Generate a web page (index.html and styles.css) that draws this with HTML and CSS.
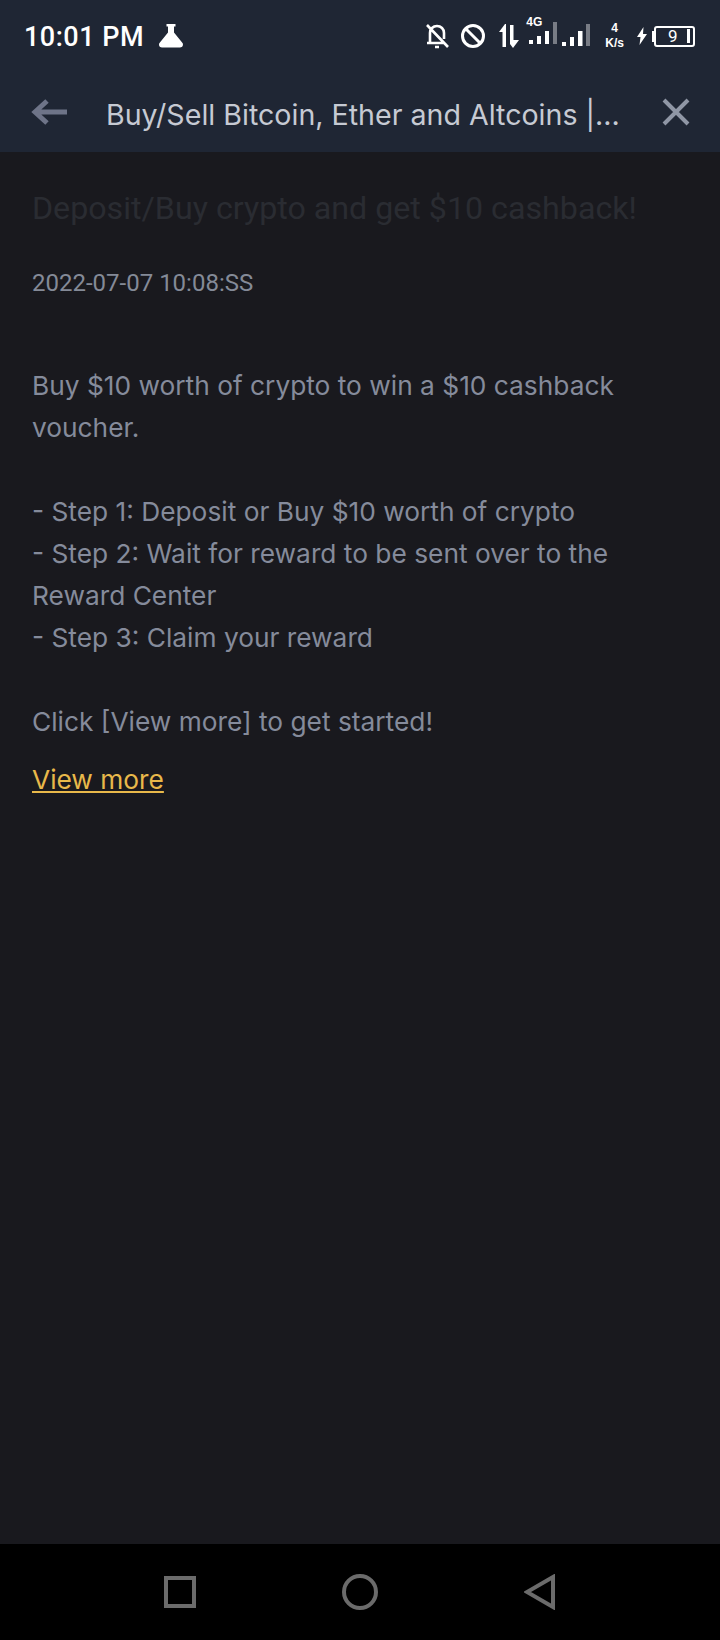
FILE: index.html
```html
<!DOCTYPE html>
<html lang="en">
<head>
    <meta charset="UTF-8">
    <meta name="viewport" content="width=device-width, initial-scale=1.0">
    <title>Deposit/Buy crypto and get $10 cashback!</title>
    <link rel="stylesheet" href="styles.css">
</head>
<body>

<div class="screen">
    <header class="top">
        <div class="status">
            <div class="clock">
                <span class="time">10:01 PM</span>
                <svg class="flask" width="26" height="26" viewBox="0 0 26 26">
                    <path d="M8.500 1h9v2.500h-1.500v6l8.500 10.500c1 1.500 .5 4.500-2.500 4.500h-18c-3 0-3.500-3-2.500-4.500l8.500-10.500v-6h-1.500z" fill="#fff"/>
                </svg>
            </div>
            <div class="indicators">
                <svg class="ico-bell" width="26" height="26" viewBox="0 0 26 26" fill="none" stroke="#fff" stroke-width="2.600">
                    <path d="M6 19v-9c0-4 3-7 7-7s7 3 7 7v6M3 20h17M11 24h4M3 2l21 22"/>
                </svg>
                <svg class="ico-ban" width="26" height="26" viewBox="0 0 26 26" fill="none" stroke="#fff" stroke-width="3">
                    <circle cx="13" cy="13" r="10.500"/>
                    <path d="M6 6l14 14"/>
                </svg>
                <svg class="ico-data" width="21" height="26" viewBox="0 0 21 26" fill="#fff">
                    <path d="M6 1l-6 8h3.500v15h3.500v-23zM11 2h3.500v15h5.500l-6 8-3-4z"/>
                </svg>
                <div class="signal">
                    <span class="net">4G</span>
                    <svg width="30" height="26" viewBox="0 0 30 26" fill="#fff">
                        <rect x="2" y="19" width="4" height="4"/>
                        <rect x="10" y="15" width="4" height="8"/>
                        <rect x="18" y="10" width="4" height="13"/>
                        <rect x="26" y="1" width="4" height="22" opacity=".4"/>
                    </svg>
                </div>
                <svg class="bars" width="30" height="26" viewBox="0 0 30 26" fill="#fff">
                    <rect x="1" y="19" width="4" height="4"/>
                    <rect x="9" y="14" width="4" height="9"/>
                    <rect x="17" y="8" width="4.500" height="15"/>
                    <rect x="25" y="1" width="4" height="22" opacity=".4"/>
                </svg>
                <div class="speed"><span>4</span><span>K/s</span></div>
                <div class="power">
                    <svg width="10" height="18" viewBox="0 0 10 18"><path d="M6.500 0l-6.500 10h3.500l-1 8 7.500-11h-4z" fill="#fff"/></svg>
                    <div class="battery"><span class="level">9</span><i class="tip"></i></div>
                </div>
            </div>
        </div>
        <nav class="toolbar">
            <svg class="back" width="38" height="28" viewBox="0 0 38 28" fill="none" stroke="#6e7488" stroke-width="5">
                <path d="M17 3l-12 11 12 11M5 14h32"/>
            </svg>
            <div class="page-title">Buy/Sell Bitcoin, Ether and Altcoins |...</div>
            <svg class="close" width="30" height="30" viewBox="0 0 30 30" fill="none" stroke="#8f96a5" stroke-width="4">
                <path d="M3 3l24 24M27 3l-24 24"/>
            </svg>
        </nav>
    </header>

    <main class="content">
        <h1 class="headline">Deposit/Buy crypto and get $10 cashback!</h1>
        <div class="stamp">2022-07-07 10:08:SS</div>
        <div class="body-text">
            <p>Buy $10 worth of crypto to win a $10 cashback voucher.</p>
            <p>- Step 1: Deposit or Buy $10 worth of crypto<br>
            - Step 2: Wait for reward to be sent over to the Reward Center<br>
            - Step 3: Claim your reward</p>
            <p>Click [View more] to get started!</p>
        </div>
        <a class="more" href="#">View more</a>
    </main>

    <footer class="navbar">
        <svg width="32" height="32" viewBox="0 0 32 32" fill="none" stroke="#6b6b6b" stroke-width="4"><rect x="2" y="2" width="28" height="28"/></svg>
        <svg width="36" height="36" viewBox="0 0 36 36" fill="none" stroke="#6b6b6b" stroke-width="4"><circle cx="18" cy="18" r="16"/></svg>
        <svg width="32" height="36" viewBox="0 0 32 36" fill="none" stroke="#6b6b6b" stroke-width="4"><path d="M29 3v30l-26-15z"/></svg>
    </footer>
</div>

</body>
</html>
```

FILE: styles.css
```css
* {
    box-sizing: border-box;
}
html, body {
    margin: 0;
    padding: 0;
}
body {
    background-color: #19191e;
    font-family: 'Inter', 'Noto Sans', sans-serif;
}
.screen {
    width: 720px;
    height: 1640px;
    display: flex;
    flex-direction: column;
    overflow: hidden;
}

/* top bar */
.top {
    height: 152px;
    flex: none;
    background-color: #1f2634;
}
.status {
    height: 72px;
    display: flex;
    align-items: center;
    justify-content: space-between;
    padding: 0 25px 0 24px;
    color: #fff;
}
.clock {
    display: flex;
    align-items: center;
    gap: 14px;
}
.time {
    padding-top: 2px;
    font-family: 'Roboto', sans-serif;
    font-size: 27px;
    font-weight: 500;
    letter-spacing: 0.5px;
}
.indicators {
    display: flex;
    align-items: center;
}
.ico-ban {
    margin-left: 10px;
}
.ico-data {
    margin-left: 13px;
}
.signal {
    position: relative;
    margin-left: 7px;
}
.net {
    position: absolute;
    left: -1px;
    top: -6px;
    font-family: 'Liberation Sans', sans-serif;
    font-size: 12px;
    font-weight: bold;
}
.bars {
    margin-left: 4px;
}
.speed {
    display: flex;
    flex-direction: column;
    align-items: center;
    font-family: 'Liberation Sans', sans-serif;
    font-size: 12px;
    font-weight: bold;
    line-height: 15px;
    margin: 0 13px 0 14px;
}
.power {
    display: flex;
    align-items: center;
    gap: 7px;
}
.battery {
    position: relative;
    width: 41px;
    height: 21px;
    border: 2px solid #fff;
    border-radius: 3px;
    display: flex;
    align-items: center;
    justify-content: space-between;
    padding: 0 3px 0 12px;
}
/* battery nib */
.battery::before {
    content: "";
    position: absolute;
    left: -4px;
    top: 3px;
    width: 2px;
    height: 11px;
    background-color: #fff;
}
.level {
    font-family: 'Roboto', sans-serif;
    font-size: 17px;
    line-height: 1;
}
.tip {
    width: 3px;
    height: 14px;
    background-color: #fff;
}
.toolbar {
    height: 80px;
    display: flex;
    align-items: center;
    padding: 0 0 0 30px;
}
.back {
    flex: none;
}
.page-title {
    margin-left: 38px;
    padding-top: 4px;
    width: 510px;
    flex: none;
    font-size: 28.600px;
    color: #c6cad3;
    white-space: nowrap;
}
.close {
    flex: none;
    margin-left: 45px;
}

/* message */
.content {
    flex: 1;
    padding: 0 32px;
    background-color: #19191e;
}
.headline {
    margin: 35px 0 0;
    font-family: 'Roboto', sans-serif;
    font-size: 32.200px;
    line-height: 42px;
    font-weight: 400;
    color: #2a2c32;
}
.stamp {
    margin-top: 39px;
    font-family: 'Roboto', sans-serif;
    font-size: 24px;
    line-height: 30px;
    color: #848a97;
}
.body-text {
    margin-top: 67px;
    font-size: 26.300px;
    line-height: 42px;
    color: #858b9b;
}
.body-text p {
    margin: 0 0 42px;
}
.body-text p:last-child {
    margin-bottom: 0;
}
.more {
    display: inline-block;
    margin-top: 16px;
    font-size: 26.300px;
    line-height: 42px;
    color: #e8b84a;
}

/* android nav */
.navbar {
    height: 96px;
    flex: none;
    background-color: #000;
    display: flex;
    align-items: center;
    justify-content: center;
    gap: 146px;
}
```
